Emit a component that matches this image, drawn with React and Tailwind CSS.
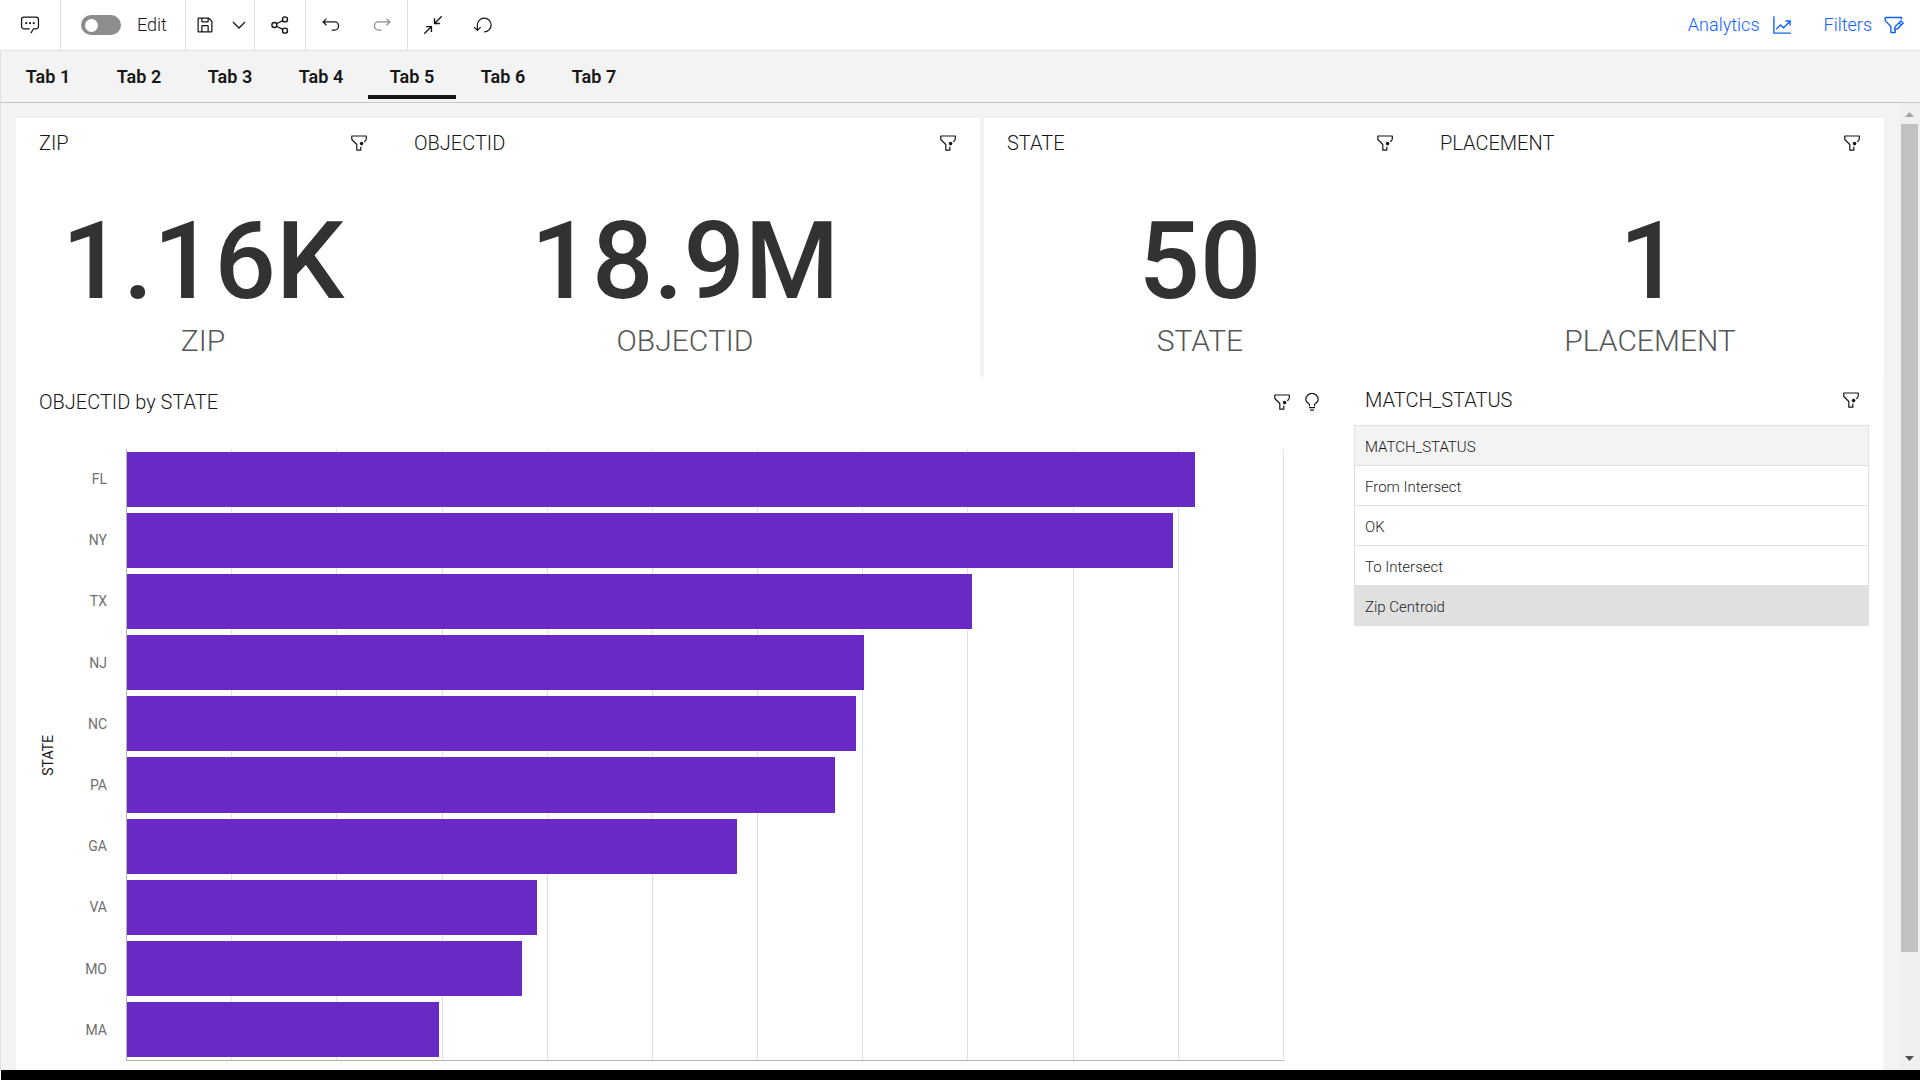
import React from "react";

const metrics = {
  left: [
    { title: "ZIP", value: "1.16K" },
    { title: "OBJECTID", value: "18.9M" },
  ],
  right: [
    { title: "STATE", value: "50" },
    { title: "PLACEMENT", value: "1" },
  ],
};

const AXIS_SPAN = 1157;
const bars = [
  { state: "FL", value: 1068 },
  { state: "NY", value: 1046 },
  { state: "TX", value: 845 },
  { state: "NJ", value: 737 },
  { state: "NC", value: 729 },
  { state: "PA", value: 708 },
  { state: "GA", value: 610 },
  { state: "VA", value: 410 },
  { state: "MO", value: 395 },
  { state: "MA", value: 312 },
];

const statuses = ["From Intersect", "OK", "To Intersect", "Zip Centroid"];

function Icon({ children, className = "size-5" }) {
  return (
    <svg viewBox="0 0 32 32" fill="currentColor" className={className} aria-hidden="true">
      {children}
    </svg>
  );
}

function CommentIcon() {
  return (
    <Icon>
      <path
        d="M15.500 22H6a3.500 3.500 0 0 1-3.500-3.500V7A3.500 3.500 0 0 1 6 3.500h20A3.500 3.500 0 0 1 29.500 7v11.500A3.500 3.500 0 0 1 26 22h-4.500l-4 7"
        fill="none"
        stroke="currentColor"
        strokeWidth="2"
      />
      <circle cx="10" cy="13" r="1.700" />
      <circle cx="16" cy="13" r="1.700" />
      <circle cx="22" cy="13" r="1.700" />
    </Icon>
  );
}

function SaveIcon() {
  return (
    <Icon>
      <path d="M27.71,9.29l-5-5A1,1,0,0,0,22,4H6A2,2,0,0,0,4,6V26a2,2,0,0,0,2,2H26a2,2,0,0,0,2-2V10A1,1,0,0,0,27.71,9.29ZM12,6h8v4H12Zm8,20H12V18h8Zm2,0V18a2,2,0,0,0-2-2H12a2,2,0,0,0-2,2v8H6V6h4v4a2,2,0,0,0,2,2h8a2,2,0,0,0,2-2V6.41l4,4V26Z" />
    </Icon>
  );
}

function ShareIcon() {
  return (
    <Icon>
      <g fill="none" stroke="currentColor" strokeWidth="2.200">
        <circle cx="24" cy="7" r="4" />
        <circle cx="24" cy="25" r="4" />
        <circle cx="7" cy="16" r="4" />
        <path d="M10.500 14l10-5M10.500 18l10 5" />
      </g>
    </Icon>
  );
}

const UNDO_PATH =
  "M20,10H5.8149l3.5874-3.5859L8,5,2,11,8,17l1.4023-1.4146L5.8179,12H22a5,5,0,0,1,5,5v1a5,5,0,0,1-5,5H17v2h5a7,7,0,0,0,7-7v-1a7,7,0,0,0-7-7Z";

function UndoIcon() {
  return (
    <Icon>
      <path d={UNDO_PATH} />
    </Icon>
  );
}

function RedoIcon() {
  return (
    <Icon>
      <path d={UNDO_PATH} transform="matrix(-1 0 0 1 32 0)" />
    </Icon>
  );
}

function CollapseIcon() {
  return (
    <Icon>
      <path
        d="M30 2L18.500 13.500M18.500 5v8.500H27M2 30l11.500-11.500M13.500 27v-8.500H5"
        fill="none"
        stroke="currentColor"
        strokeWidth="2.200"
      />
    </Icon>
  );
}

function ResetIcon() {
  return (
    <Icon>
      <path d="M18,28A12,12,0,1,0,6,16v6.2L2.4,18.6,1,20l6,6,6-6-1.400-1.400L8,22.200V16A10,10,0,1,1,18,26Z" />
    </Icon>
  );
}

function AnalyticsIcon() {
  return (
    <Icon>
      <path
        d="M3 2v27h27M6.500 23l7-7 5 4.500L29 10M21.500 9.500H29V17"
        fill="none"
        stroke="currentColor"
        strokeWidth="2.200"
      />
    </Icon>
  );
}

function FilterEditIcon() {
  return (
    <Icon>
      <path
        d="M28 7V4H2v5l9 9.500V28h7v-4"
        fill="none"
        stroke="currentColor"
        strokeWidth="2.200"
        strokeLinejoin="round"
      />
      <path
        d="M17 23l1-4.500L27 9.500l3.500 3.500-9 9z"
        fill="none"
        stroke="currentColor"
        strokeWidth="2.200"
      />
      <path d="M24 12.500l3.500 3.500" stroke="currentColor" strokeWidth="2" />
    </Icon>
  );
}

function FilterDotIcon() {
  return (
    <svg viewBox="0 0 16 16" className="size-4" fill="none" aria-hidden="true">
      <path
        d="M15.300 4.800V1H.8V4.500l5 5V15.200h4v-3.400M15 4.800l-1.600 2"
        stroke="currentColor"
        strokeWidth="1.200"
        strokeLinejoin="round"
      />
      <circle cx="10.600" cy="8.600" r="1.800" fill="currentColor" />
    </svg>
  );
}

function BulbIcon() {
  return (
    <svg viewBox="0 0 14 18" className="h-[18px] w-3.5" fill="none" aria-hidden="true">
      <path
        d="M4.500 13.300v-1.500C4.500 10.300 .8 9.500 .8 6.500a6.200 6 0 0 1 12.400 0c0 3-3.700 3.800-3.700 5.300v1.500M4 14.600h6M5 17.200h4"
        stroke="currentColor"
        strokeWidth="1.200"
      />
    </svg>
  );
}

function IconButton({ label, children, className = "" }) {
  return (
    <button type="button" aria-label={label} className={`flex items-center justify-center ${className}`}>
      {children}
    </button>
  );
}

function Toolbar() {
  return (
    <header className="flex h-[51px] shrink-0 items-stretch border-b border-[#e0e0e0] bg-white text-lg text-[#161616]">
      <IconButton label="Comments" className="w-[61px] border-r border-[#e0e0e0]">
        <CommentIcon />
      </IconButton>
      <label className="flex w-[125px] items-center gap-4 border-r border-[#e0e0e0] pl-5">
        <input type="checkbox" role="switch" className="peer sr-only" />
        <span className="flex h-5 w-10 items-center rounded-full bg-[#8d8d8d] px-1">
          <span className="size-[13px] rounded-full bg-white" />
        </span>
        Edit
      </label>
      <div className="flex w-[69px] items-stretch border-r border-[#e0e0e0]">
        <IconButton label="Save" className="w-[38px]">
          <SaveIcon />
        </IconButton>
        <IconButton label="Save options" className="w-[30px]">
          <svg viewBox="0 0 14 14" className="size-3.5" fill="none" aria-hidden="true">
            <path d="M1 4l6 6 6-6" stroke="currentColor" strokeWidth="1.300" />
          </svg>
        </IconButton>
      </div>
      <IconButton label="Share" className="w-[51px] border-r border-[#e0e0e0]">
        <ShareIcon />
      </IconButton>
      <div className="flex w-[102px] items-stretch border-r border-[#e0e0e0]">
        <IconButton label="Undo" className="flex-1">
          <UndoIcon />
        </IconButton>
        <IconButton label="Redo" className="flex-1 text-[#8d8d8d]">
          <RedoIcon />
        </IconButton>
      </div>
      <IconButton label="Collapse" className="w-[50px]">
        <CollapseIcon />
      </IconButton>
      <IconButton label="Reset" className="w-[50px]">
        <ResetIcon />
      </IconButton>
      <div className="ml-auto flex items-center gap-8 pr-4 text-[#0f62fe]">
        <button type="button" className="flex items-center gap-3">
          Analytics <AnalyticsIcon />
        </button>
        <button type="button" className="flex items-center gap-3">
          Filters <FilterEditIcon />
        </button>
      </div>
    </header>
  );
}

function Tabs() {
  return (
    <nav
      role="tablist"
      className="flex h-[52px] shrink-0 gap-[3px] border-b border-[#c6c6c6] pb-[3px] pl-[3px] text-lg font-semibold text-[#161616]"
    >
      {[1, 2, 3, 4, 5, 6, 7].map((n) => (
        <button
          key={n}
          type="button"
          role="tab"
          aria-selected={n === 5}
          className={
            n === 5
              ? "w-[88px] border-b-4 border-[#161616] pt-2"
              : "w-[88px] border-b-4 border-transparent pt-2"
          }
        >
          Tab {n}
        </button>
      ))}
    </nav>
  );
}

function WidgetHeader({ title, children }) {
  return (
    <div className="flex items-center justify-between">
      <h2 className="text-xl leading-6 text-[#161616]">{title}</h2>
      <div className="flex items-center gap-[15px] text-[#161616]">
        <IconButton label={`Filters for ${title}`}>
          <FilterDotIcon />
        </IconButton>
        {children}
      </div>
    </div>
  );
}

function Metric({ title, value }) {
  return (
    <section className="pt-[13px] pr-6 pl-[23px]">
      <WidgetHeader title={title} />
      <p className="mt-[43px] text-center text-[108px] leading-[126px] font-medium text-[#323232]">{value}</p>
      <p className="text-center text-3xl leading-[34px] text-[#565656]">{title}</p>
    </section>
  );
}

function BarChart() {
  return (
    <section className="flex flex-col bg-white pt-[13px]">
      <div className="px-[23px]">
        <WidgetHeader title="OBJECTID by STATE">
          <IconButton label="Insights">
            <BulbIcon />
          </IconButton>
        </WidgetHeader>
      </div>
      <div className="mt-[35px] flex h-[612px] pr-[58px] text-sm font-normal">
        <div className="flex w-16 items-center justify-center text-[#161616]">
          <span className="rotate-180 [writing-mode:vertical-rl]">STATE</span>
        </div>
        <ul className="grid w-[46px] grid-rows-10 pr-[19px] text-right text-[#6f6f6f]">
          {bars.map((b) => (
            <li key={b.state} className="flex items-center justify-end pb-px">
              {b.state}
            </li>
          ))}
        </ul>
        <div className="grid flex-1 border-b border-l border-[#b4b4b4]">
          <div className="col-start-1 row-start-1 grid grid-cols-11">
            {Array.from({ length: 11 }, (_, i) => (
              <div key={i} className="border-r border-[#e0e0e0]" />
            ))}
          </div>
          <div className="col-start-1 row-start-1 grid grid-rows-10">
            {bars.map((b) => (
              <div key={b.state} className="flex items-stretch py-[3px]">
                <div className="bg-[#6929c4]" style={{ width: `${(b.value / AXIS_SPAN) * 100}%` }} />
              </div>
            ))}
          </div>
        </div>
      </div>
    </section>
  );
}

function StatusTable() {
  return (
    <section className="bg-white pt-[11px] pr-3.5 pl-3">
      <div className="pr-2.5 pl-[11px]">
        <WidgetHeader title="MATCH_STATUS" />
      </div>
      <table className="mt-[13px] w-full border-collapse text-left text-[15px] leading-5 text-[#262626]">
        <thead>
          <tr className="h-10 border border-[#e0e0e0] bg-[#f3f3f3] text-[#161616]">
            <th className="px-2.5 pt-0.5 font-[350]">MATCH_STATUS</th>
          </tr>
        </thead>
        <tbody>
          {statuses.map((s) => (
            <tr
              key={s}
              className={
                s === "Zip Centroid"
                  ? "h-10 border border-[#e0e0e0] bg-[#e0e0e0]"
                  : "h-10 border border-[#e0e0e0]"
              }
            >
              <td className="px-2.5 pt-0.5">{s}</td>
            </tr>
          ))}
        </tbody>
      </table>
    </section>
  );
}

function ScrollTrack() {
  return (
    <div className="flex w-[21px] shrink-0 flex-col items-center bg-[#f0f0f0]" aria-hidden="true">
      <svg viewBox="0 0 21 21" className="size-[21px] shrink-0">
        <path d="M6 14h9l-4.500-5z" fill="#a3a3a3" />
      </svg>
      <div className="w-[17px] flex-[828] bg-[#c1c1c1]" />
      <div className="flex-[97]" />
      <svg viewBox="0 0 21 21" className="size-[21px] shrink-0">
        <path d="M6 7h9l-4.500 5z" fill="#505050" />
      </svg>
    </div>
  );
}

export default function App() {
  return (
    <div className="flex h-screen flex-col overflow-hidden bg-white font-[Roboto,'Noto_Sans',sans-serif] font-[350]">
      <Toolbar />
      <div className="flex min-h-0 flex-1 flex-col border-l border-[#e0e0e0] bg-[#f3f3f3]">
        <Tabs />
        <div className="flex min-h-0 flex-1">
          <main className="flex min-w-0 flex-1 flex-col overflow-hidden px-[15px] pt-[15px]">
            <div className="grid h-[259px] shrink-0 grid-cols-[964fr_900fr] gap-1">
              <div className="grid grid-cols-[375fr_589fr] bg-white">
                {metrics.left.map((m) => (
                  <Metric key={m.title} {...m} />
                ))}
              </div>
              <div className="grid grid-cols-[433fr_467fr] bg-white">
                {metrics.right.map((m) => (
                  <Metric key={m.title} {...m} />
                ))}
              </div>
            </div>
            <div className="mr-px grid flex-1 grid-cols-[1326fr_541fr]">
              <BarChart />
              <StatusTable />
            </div>
          </main>
          <ScrollTrack />
        </div>
      </div>
      <footer className="ml-px h-2.5 shrink-0 bg-black" />
    </div>
  );
}
